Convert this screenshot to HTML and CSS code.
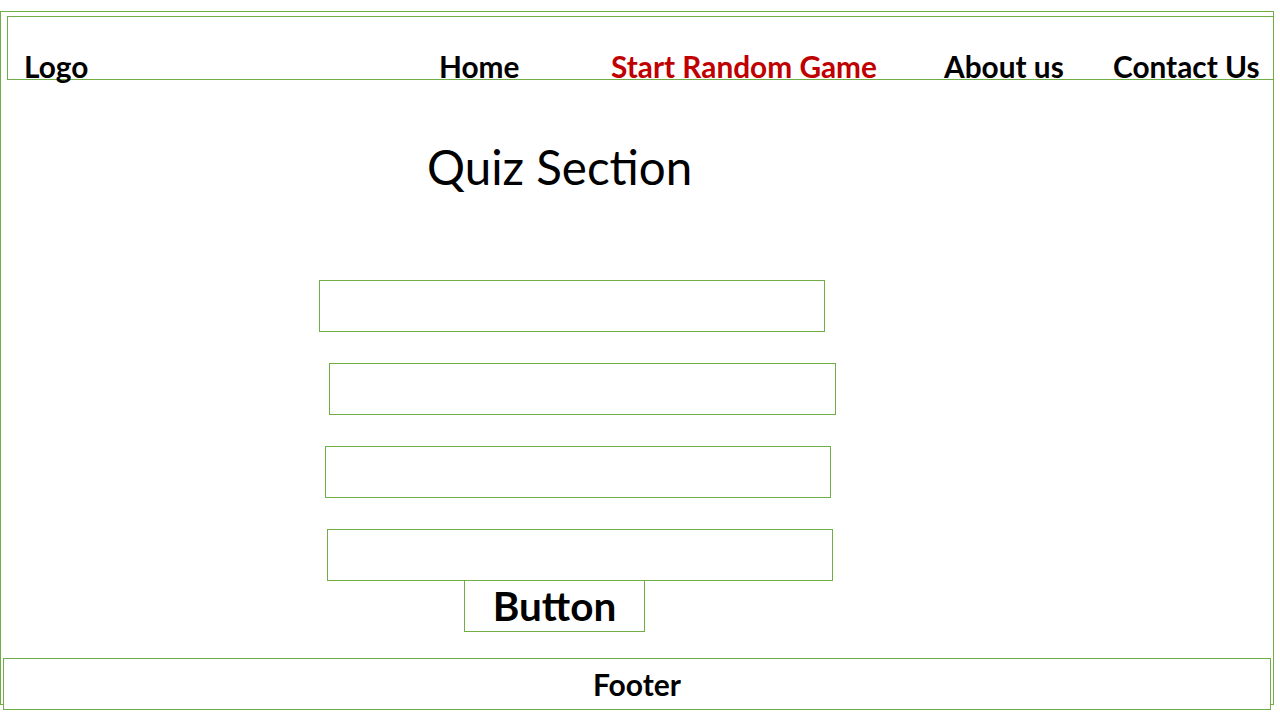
FILE: index.html
```html
<!DOCTYPE html>
<html lang="en">
<head>
<meta charset="utf-8">
<title>Quiz Section</title>
<link rel="stylesheet" href="styles.css">
</head>
<body>
<div class="frame">
  <header class="topbar">
    <div class="nav-item">Logo</div>
    <div class="nav-item">Home</div>
    <div class="nav-item nav-active">Start Random Game</div>
    <div class="nav-item">About us</div>
    <div class="nav-item">Contact Us</div>
  </header>
  <h1 class="title">Quiz Section</h1>
  <div class="quiz">
    <div class="answer answer-1"></div>
    <div class="answer answer-2"></div>
    <div class="answer answer-3"></div>
    <div class="answer answer-4"></div>
    <div class="button">Button</div>
  </div>
</div>
<footer class="footer">Footer</footer>
</body>
</html>
```

FILE: styles.css
```css
html, body {
  margin: 0;
  padding: 0;
  background: #ffffff;
}

body {
  font-family: Lato, "Open Sans", sans-serif;
  color: #000000;
}

.frame {
  box-sizing: border-box;
  width: 1274px;
  height: 694px;
  margin-top: 11px;
  border: 1px solid #70ad47;
  display: flex;
  flex-direction: column;
}

.topbar {
  box-sizing: border-box;
  width: 1267px;
  height: 64px;
  margin: 4px 0 0 6px;
  border: 1px solid #70ad47;
  padding: 32px 0 0 16px;
  display: grid;
  grid-template-columns: 415px 172px 333px 169px auto;
  flex-shrink: 0;
}

.nav-item {
  font-size: 29.8px;
  font-weight: 700;
  line-height: 36px;
  white-space: nowrap;
}

.nav-active {
  color: #c00000;
}

.title {
  margin: 59px 0 0 426px;
  height: 56px;
  font-size: 47.5px;
  font-weight: 400;
  line-height: 56px;
  white-space: nowrap;
}

.quiz {
  display: flex;
  flex-direction: column;
  align-items: flex-start;
  margin-top: 85px;
  gap: 31px;
}

.answer {
  box-sizing: border-box;
  width: 506px;
  height: 52px;
  border: 1px solid #70ad47;
}

.answer-1 { margin-left: 318px; }
.answer-2 { margin-left: 328px; width: 507px; }
.answer-3 { margin-left: 324px; }
.answer-4 { margin-left: 326px; }

.button {
  box-sizing: border-box;
  width: 181px;
  height: 52px;
  margin: -32px 0 0 463px;
  border: 1px solid #70ad47;
  display: flex;
  align-items: center;
  justify-content: center;
  font-size: 40.5px;
  font-weight: 700;
  line-height: 1.2;
}

.footer {
  position: relative;
  box-sizing: border-box;
  width: 1268px;
  height: 52px;
  margin: -47px 0 0 3px;
  border: 1px solid #70ad47;
  background: #ffffff;
  display: flex;
  align-items: center;
  justify-content: center;
  font-size: 30px;
  font-weight: 700;
  line-height: 1.2;
}
```
